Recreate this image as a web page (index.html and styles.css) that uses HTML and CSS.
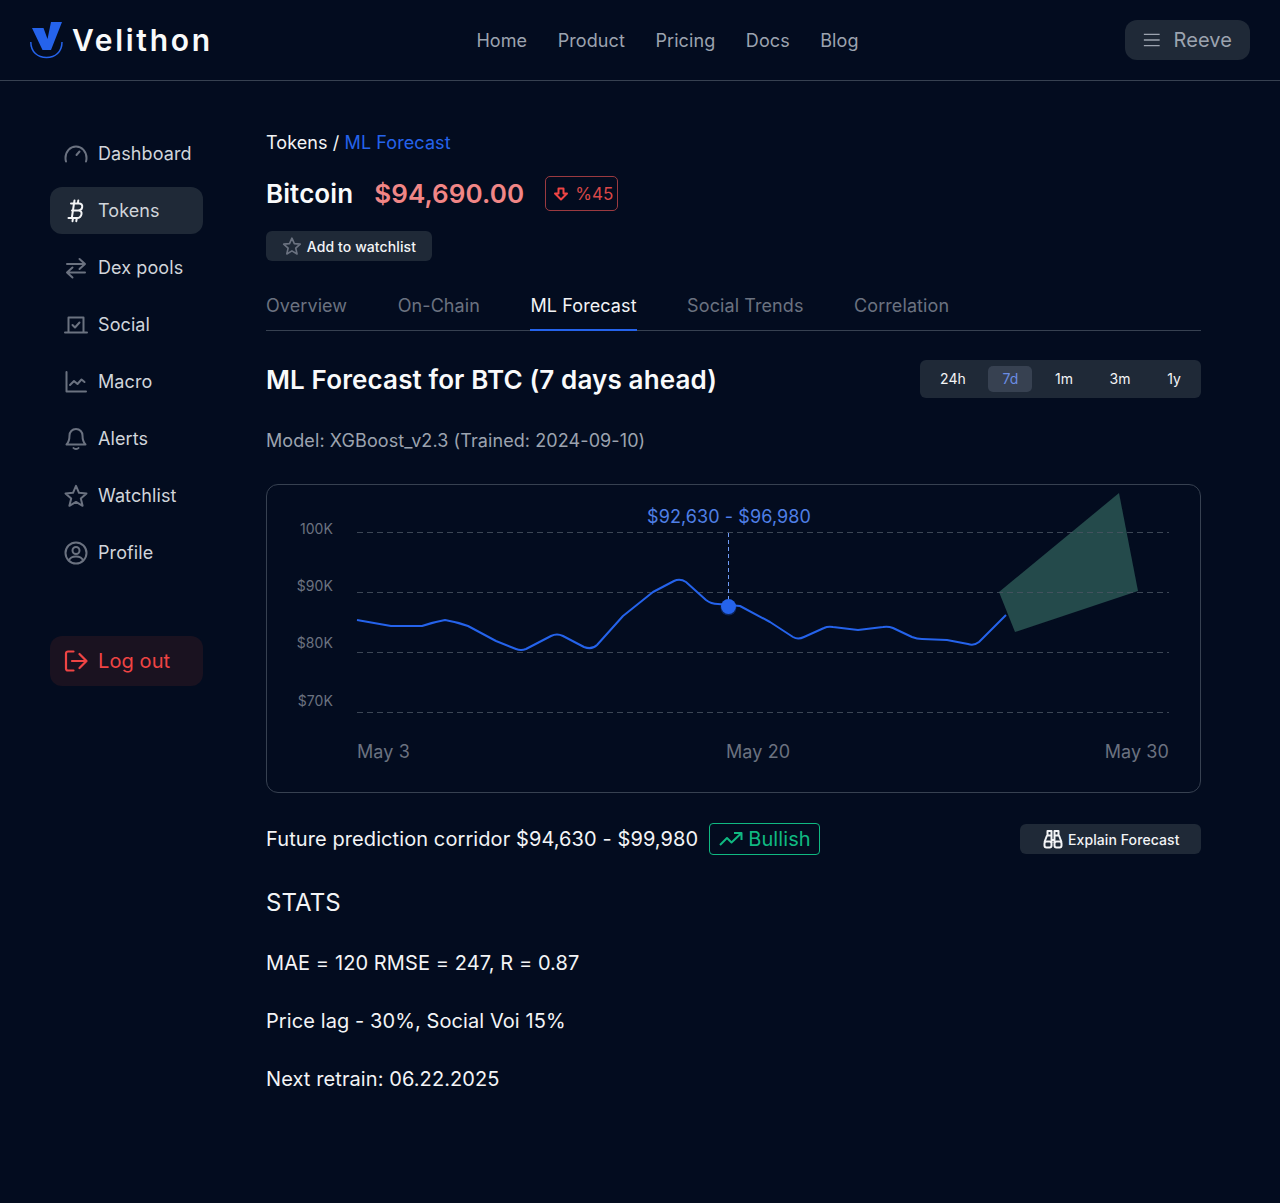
FILE: index.html
```html
<!DOCTYPE html>
<html lang="en">
<head>
<meta charset="utf-8">
<title>Velithon – ML Forecast</title>
<link rel="stylesheet" href="styles.css">
</head>
<body>
<header class="topbar">
  <a class="logo">
    <svg class="logo-mark" viewBox="0 0 34 40" width="34" height="40">
      <path class="logo-v" d="M2 8h11.500l4 11L21 2h11L21 30h-8.500z"/>
      <path class="logo-arc" d="M.8 22c0 10 7 15.500 15.700 15.500S32 32 32 22"/>
    </svg>
    <span class="logo-text">Velithon</span>
  </a>
  <nav class="topnav">
    <a>Home</a><a>Product</a><a>Pricing</a><a>Docs</a><a>Blog</a>
  </nav>
  <button class="user-btn">
    <svg class="ico-menu" viewBox="0 0 20 16" width="20" height="16"><path d="M1 1.500h18M1 8h18M1 14.500h18"/></svg>
    <span>Reeve</span>
  </button>
</header>

<div class="layout">
  <aside class="sidebar">
    <ul class="side-list">
      <li class="side-item">
        <svg class="ico" viewBox="0 0 24 24"><path d="M2 19.500A10.800 10.800 0 0 1 1.500 16C1.500 9.700 6 4.500 12 4.500S22.500 9.700 22.500 16c0 1.200-.1 2.400-.5 3.500M15.500 9.500 12.500 13"/></svg>
        <span>Dashboard</span>
      </li>
      <li class="side-item is-active">
        <svg class="ico ico-btc" viewBox="0 0 24 24"><path d="M9 4.500h6c2.400 0 3.500 1.500 3.200 3.500-.3 2-1.900 3.500-4.200 3.500H8M8 11.500h6.500c2.400 0 3.400 1.600 3 3.600-.4 2.300-2.200 3.900-4.500 3.900H6.500M10 4.500 7.800 19M10.500 1.500l-.5 3M14.300 1.500l-.5 3M9 19l-.5 3.200M12.800 19l-.5 3.200M7 4.500h3M4.500 19H8"/></svg>
        <span>Tokens</span>
      </li>
      <li class="side-item">
        <svg class="ico" viewBox="0 0 24 24"><path d="M3 8h18M15.500 3l5.500 5-5.500 5M21 16.500H3M8.500 11.500l-5.500 5 5.500 5"/></svg>
        <span>Dex pools</span>
      </li>
      <li class="side-item">
        <svg class="ico" viewBox="0 0 24 24"><path d="M4.500 19V4.500h15V19M1 19.500h22M8.500 12l2.500 2.500 4.500-5"/></svg>
        <span>Social</span>
      </li>
      <li class="side-item">
        <svg class="ico" viewBox="0 0 24 24"><path d="M2.500 2v19.500H22M6 15l4-4 3.500 3 4-4.500 3 2.500"/></svg>
        <span>Macro</span>
      </li>
      <li class="side-item">
        <svg class="ico" viewBox="0 0 24 24"><path d="M12 2c-4 0-6.500 3-6.500 6.500 0 5-1 7-3 9h19c-2-2-3-4-3-9C18.500 5 16 2 12 2zM9.500 21c1 1.300 4 1.300 5 0"/></svg>
        <span>Alerts</span>
      </li>
      <li class="side-item">
        <svg class="ico" viewBox="0 0 24 24"><path d="M12 1.800l3 7 7.500.6-5.700 5 1.800 7.400L12 17.900l-6.600 3.900 1.800-7.400-5.700-5L9 8.800z"/></svg>
        <span>Watchlist</span>
      </li>
      <li class="side-item">
        <svg class="ico" viewBox="0 0 24 24"><circle cx="12" cy="12" r="10.500"/><circle cx="12" cy="9.500" r="3.500"/><path d="M5 19.500c1-3 3.500-4 7-4s6 1 7 4"/></svg>
        <span>Profile</span>
      </li>
    </ul>
    <a class="logout">
      <svg class="ico ico-red" viewBox="0 0 24 24"><path d="M9.500 2.500H4a2 2 0 0 0-2 2v15a2 2 0 0 0 2 2h5.500M8 12h14.500M15.500 5l7 7-7 7"/></svg>
      <span>Log out</span>
    </a>
  </aside>

  <main class="content">
    <div class="crumbs">Tokens <span class="crumb-sep">/</span> <span class="crumb-cur">ML Forecast</span></div>
    <div class="title-row">
      <h1 class="coin">Bitcoin</h1>
      <span class="price">$94,690.00</span>
      <span class="delta">
        <svg viewBox="0 0 16 16" width="16" height="16"><path d="M5.500 2.500h5v5H14L8 13.500 2 7.500h3.500z"/></svg>
        <span>%45</span>
      </span>
    </div>
    <button class="btn btn-watch">
      <svg class="ico-sm" viewBox="0 0 24 24"><path d="M12 2.500l2.900 6.600 7.100.7-5.400 4.800 1.600 7L12 17.900l-6.200 3.700 1.600-7L2 9.800l7.100-.7z"/></svg>
      <span>Add to watchlist</span>
    </button>

    <div class="tabs">
      <a class="tab">Overview</a>
      <a class="tab">On-Chain</a>
      <a class="tab is-active">ML Forecast</a>
      <a class="tab">Social Trends</a>
      <a class="tab">Correlation</a>
    </div>

    <div class="forecast-head">
      <h2>ML Forecast for BTC (7 days ahead)</h2>
      <div class="segments">
        <span class="seg">24h</span>
        <span class="seg is-active">7d</span>
        <span class="seg">1m</span>
        <span class="seg">3m</span>
        <span class="seg">1y</span>
      </div>
    </div>

    <p class="model">Model: XGBoost_v2.3 (Trained: 2024-09-10)</p>

    <div class="chart">
      <svg class="chart-svg" viewBox="267 485 933 307" width="933" height="307">
        <polygon class="corridor" points="999,592 1119,493 1138,591 1015,632"/>
        <g class="grid">
          <line x1="357" y1="532.500" x2="1169" y2="532.500"/>
          <line x1="357" y1="592.500" x2="1169" y2="592.500"/>
          <line x1="357" y1="652.500" x2="1169" y2="652.500"/>
          <line x1="357" y1="712.500" x2="1169" y2="712.500"/>
        </g>
        <g class="y-labels">
          <text x="333" y="534">100K</text>
          <text x="333" y="591">$90K</text>
          <text x="333" y="648">$80K</text>
          <text x="333" y="706">$70K</text>
        </g>
        <g class="x-labels">
          <text x="357" y="758">May 3</text>
          <text x="726" y="758">May 20</text>
          <text x="1169" y="758" class="end">May 30</text>
        </g>
        <text class="range" x="729" y="523">$92,630 - $96,980</text>
        <line class="marker" x1="728.500" y1="533" x2="728.500" y2="600"/>
        <path class="price-line" d="M357 620L391 626L422 626Q434 622 445 620Q457 622 468 626L496 641L516 649Q521 651 526 649L551 636Q557 633 563 636L584 647Q592 650 597 645L623 616L653 592L674 581Q680 578 686 582L706 600Q711 604 718 604L740 606L770 622L793 637Q798 640 804 637L824 628Q828 626 833 627L858 630L883 627Q888 626 893 628L912 637Q917 639 922 639L947 640L968 644Q974 646 979 642L1006 615"/>
        <circle class="dot-glow" cx="728.500" cy="607.500" r="8"/>
        <circle class="dot" cx="728.500" cy="606.500" r="7.500"/>
      </svg>
    </div>

    <div class="corridor-row">
      <span class="corridor-text">Future prediction corridor $94,630 - $99,980</span>
      <span class="bull">
        <svg viewBox="0 0 24 16" width="24" height="16"><path d="M1 14l7-7 4.500 4.500L22 2.500M15 2h7.500v7"/></svg>
        <span>Bullish</span>
      </span>
      <button class="btn btn-explain">
        <svg class="ico-bino" viewBox="0 0 20 20" width="20" height="20"><path d="M4.500 2h4v4.500h-4zM11.500 2h4v4.500h-4zM4 6.500h4.500V11h3V6.500H16M4 6.500 1.500 13M16 6.500l2.500 6.500M8.500 11v3M11.500 11v3"/><rect x="1.500" y="12.500" width="7" height="6" rx="2"/><rect x="11.500" y="12.500" width="7" height="6" rx="2"/></svg>
        <span>Explain Forecast</span>
      </button>
    </div>

    <h3 class="stats-title">STATS</h3>
    <p class="stat">MAE = 120 RMSE = 247, R = 0.87</p>
    <p class="stat">Price lag - 30%, Social Voi 15%</p>
    <p class="stat">Next retrain: 06.22.2025</p>
  </main>
</div>
</body>
</html>
```
FILE: styles.css
```css
* { box-sizing: border-box; }
html, body { margin: 0; padding: 0; }
body {
  min-height: 100vh;
  background: #030c1f;
  color: #f3f4f6;
  font-family: Inter, "Liberation Sans", sans-serif;
  font-size: 18px;
  letter-spacing: .005em;
  overflow: hidden;
}
h1, h2, h3, p, ul { margin: 0; padding: 0; }
button { font-family: inherit; border: 0; letter-spacing: inherit; }

/* top bar */
.topbar {
  height: 81px;
  display: flex;
  align-items: center;
  justify-content: space-between;
  padding: 0 30px;
  border-bottom: 1px solid #374151;
}
.logo { display: flex; align-items: center; gap: 8px; width: 193px; }
.logo-mark { display: block; flex: none; }
.logo-v { fill: #2563eb; }
.logo-arc { fill: none; stroke: #2563eb; stroke-width: 1.500; }
.logo-text { font-size: 30px; font-weight: 600; letter-spacing: 2.700px; color: #f9fafb; line-height: 36px; }
.topnav { display: flex; gap: 30.500px; color: #9ca3af; margin-left: -13px; }
.user-btn {
  width: 125px;
  height: 40px;
  display: flex;
  align-items: center;
  gap: 13px;
  padding: 0 18px;
  background: #1f2937;
  color: #9ca3af;
  border-radius: 12px;
  font-size: 20px;
}
.ico-menu { fill: none; stroke: #9ca3af; stroke-width: 1.500; }

/* layout */
.layout { display: flex; padding: 49px 79px 0 50px; }
.sidebar { width: 153px; margin-right: 63px; flex: none; }
.side-list { list-style: none; display: flex; flex-direction: column; gap: 10px; }
.side-item {
  height: 47px;
  display: flex;
  align-items: center;
  gap: 10px;
  padding-left: 14px;
  border-radius: 12px;
  color: #d1d5db;
}
.side-item.is-active { background: #1f2937; }
.ico { width: 24px; height: 24px; flex: none; fill: none; stroke: #6b7280; stroke-width: 2; stroke-linecap: round; stroke-linejoin: round; }
.ico-btc { stroke: #f3f4f6; stroke-width: 2; }
.ico-red { stroke: #ef4444; stroke-width: 2.200; }
.logout {
  height: 50px;
  margin-top: 60px;
  display: flex;
  align-items: center;
  gap: 10px;
  padding-left: 14px;
  background: #1a1220;
  border-radius: 12px;
  color: #ef4444;
  font-size: 20px;
}

/* content */
.content { width: 935px; flex: none; padding-top: 1px; }
.crumbs { line-height: 24px; color: #f3f4f6; }
.crumb-cur { color: #2563eb; }
.title-row { display: flex; align-items: center; height: 35px; margin-top: 21px; }
.coin { font-size: 26px; font-weight: 600; color: #f9fafb; margin-right: 21px; }
.price { font-size: 26px; font-weight: 600; color: #f18686; margin-right: 21px; }
.delta {
  height: 35px;
  width: 73px;
  display: flex;
  align-items: center;
  gap: 6px;
  padding-left: 7px;
  border: 1px solid #9b3a40;
  border-radius: 5px;
  color: #d94848;
  font-size: 17px;
}
.delta svg { fill: none; stroke: #ef4444; stroke-width: 2; stroke-linejoin: round; }
.btn {
  display: flex;
  align-items: center;
  height: 30px;
  background: #1f2937;
  color: #f3f4f6;
  font-size: 14px;
  font-weight: 500;
  border-radius: 6px;
  white-space: nowrap;
}
.btn-watch { width: 166px; margin-top: 20px; padding: 0 16px; gap: 5px; }
.ico-sm { width: 20px; height: 20px; fill: none; stroke: #6b7280; stroke-width: 2; stroke-linejoin: round; }

.tabs {
  display: flex;
  gap: 50.500px;
  margin-top: 19px;
  height: 51px;
  border-bottom: 1px solid #374151;
  color: #6b7280;
}
.tab { height: 51px; padding-top: 15px; line-height: 22px; }
.tab.is-active { color: #f3f4f6; border-bottom: 2px solid #2563eb; }

.forecast-head { display: flex; align-items: center; justify-content: space-between; margin-top: 29px; height: 38px; }
.forecast-head h2 { font-size: 26px; font-weight: 600; letter-spacing: .13px; color: #f9fafb; }
.segments {
  display: flex;
  align-items: center;
  justify-content: space-between;
  width: 281px;
  height: 38px;
  padding: 0 6px;
  background: #1f2937;
  border-radius: 6px;
  font-size: 14px;
}
.seg { height: 26px; line-height: 26px; padding: 0 14px; border-radius: 5px; color: #f3f4f6; }
.seg.is-active { background: #374151; color: #6b8de3; }

.model { margin-top: 32px; line-height: 22px; color: #9ca3af; }

.chart {
  margin-top: 32px;
  height: 309px;
  border: 1px solid #374151;
  border-radius: 12px;
  overflow: hidden;
}
.chart-svg { display: block; }
.corridor { fill: #244a4b; }
.grid line { stroke: #4b5563; stroke-width: 1; stroke-dasharray: 6 4; opacity: .8; }
.y-labels text { font-size: 14px; fill: #6b7280; text-anchor: end; }
.x-labels text { font-size: 18px; fill: #6b7280; }
.x-labels .end { text-anchor: end; }
.range { font-size: 18px; fill: #4f7fe6; text-anchor: middle; }
.marker { stroke: #6f9bf5; stroke-width: 1; stroke-dasharray: 4 3; }
.price-line { fill: none; stroke: #2563eb; stroke-width: 2; stroke-linejoin: round; }
.dot { fill: #2563eb; }
.dot-glow { fill: #2563eb; opacity: .3; }

.corridor-row { display: flex; align-items: center; height: 32px; margin-top: 30px; }
.corridor-text { font-size: 20px; color: #f3f4f6; margin-right: 11px; }
.bull {
  display: flex;
  align-items: center;
  gap: 5px;
  width: 111px;
  height: 32px;
  padding-left: 9px;
  border: 1px solid #10b981;
  border-radius: 4px;
  color: #10b981;
  font-size: 20px;
}
.bull svg { fill: none; stroke: #10b981; stroke-width: 2; stroke-linejoin: round; }
.btn-explain { margin-left: auto; width: 181px; padding: 0 23px; gap: 5px; justify-content: flex-start; }
.ico-bino { fill: none; stroke: #f3f4f6; stroke-width: 2; stroke-linejoin: round; flex: none; }

.stats-title { margin-top: 33px; font-size: 24px; font-weight: 400; line-height: 30px; color: #f3f4f6; }
.stat { font-size: 20px; line-height: 24px; color: #f3f4f6; margin-top: 34px; }
.stats-title + .stat { margin-top: 33px; }
```
